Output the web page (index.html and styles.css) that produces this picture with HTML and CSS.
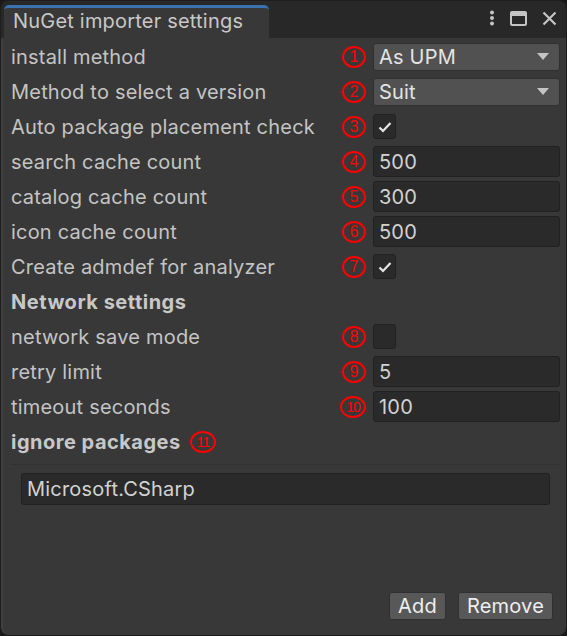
FILE: index.html
```html
<!DOCTYPE html>
<html>
<head>
<meta charset="utf-8">
<link rel="stylesheet" href="styles.css">
</head>
<body>
<div class="window">
  <div class="tabbar">
    <div class="tab">NuGet importer settings</div>
    <div class="tools">
      <svg class="kebab" width="6" height="16" viewBox="0 0 6 16"><circle cx="3" cy="2.5" r="2" fill="#c4c4c4"/><circle cx="3" cy="8" r="2" fill="#c4c4c4"/><circle cx="3" cy="13.5" r="2" fill="#c4c4c4"/></svg>
      <svg class="max" width="17" height="15" viewBox="0 0 17 15"><rect x="1" y="1" width="15" height="13" rx="1" fill="none" stroke="#c4c4c4" stroke-width="2"/><rect x="1" y="1" width="15" height="4" fill="#c4c4c4"/></svg>
      <svg class="close" width="15" height="15" viewBox="0 0 15 15"><path d="M1.5 1.5L13.5 13.5M13.5 1.5L1.5 13.5" stroke="#c4c4c4" stroke-width="2.2"/></svg>
    </div>
  </div>
  <div class="content">
    <div class="row"><span class="label">install method</span><span class="num">1</span><div class="dropdown">As UPM<span class="arrow"></span></div></div>
    <div class="row"><span class="label">Method to select a version</span><span class="num">2</span><div class="dropdown">Suit<span class="arrow"></span></div></div>
    <div class="row"><span class="label">Auto package placement check</span><span class="num">3</span><div class="check"><svg width="14" height="12" viewBox="0 0 14 12"><path d="M1.5 6.5L5 10L12.5 2" fill="none" stroke="#e6e6e6" stroke-width="2.2"/></svg></div></div>
    <div class="row"><span class="label">search cache count</span><span class="num">4</span><div class="field">500</div></div>
    <div class="row"><span class="label">catalog cache count</span><span class="num">5</span><div class="field">300</div></div>
    <div class="row"><span class="label">icon cache count</span><span class="num">6</span><div class="field">500</div></div>
    <div class="row"><span class="label">Create admdef for analyzer</span><span class="num">7</span><div class="check"><svg width="14" height="12" viewBox="0 0 14 12"><path d="M1.5 6.5L5 10L12.5 2" fill="none" stroke="#e6e6e6" stroke-width="2.2"/></svg></div></div>
    <div class="row"><span class="label bold">Network settings</span></div>
    <div class="row"><span class="label">network save mode</span><span class="num">8</span><div class="check"></div></div>
    <div class="row"><span class="label">retry limit</span><span class="num">9</span><div class="field">5</div></div>
    <div class="row"><span class="label">timeout seconds</span><span class="num small">10</span><div class="field">100</div></div>
    <div class="row"><span class="label bold">ignore packages</span><span class="num small inline">11</span></div>
    <div class="list">
      <div class="field listfield">Microsoft.CSharp</div>
    </div>
    <div class="buttons">
      <button class="btn">Add</button>
      <button class="btn">Remove</button>
    </div>
  </div>
</div>
</body>
</html>
```
FILE: styles.css
```css
html, body {
  margin: 0;
  padding: 0;
  background: #191919;
  width: 567px;
  height: 636px;
  overflow: hidden;
}
body {
  font-family: Inter, "Noto Sans", sans-serif;
  color: #d2d2d2;
}
.window {
  width: 567px;
  height: 636px;
  background: #282828;
  border-radius: 8px;
  box-sizing: border-box;
  border: 1px solid #1e1e1e;
  display: flex;
  flex-direction: column;
  overflow: hidden;
}
.tabbar {
  height: 37px;
  display: flex;
  align-items: flex-end;
  padding-left: 3px;
  flex: none;
}
.tab {
  width: 265px;
  height: 33px;
  background: #383838;
  border-top: 3px solid #3a72b0;
  border-radius: 5px 5px 0 0;
  box-sizing: border-box;
  font-size: 20px;
  letter-spacing: 0.2px;
  color: #c8c8c8;
  padding-left: 9px;
  line-height: 27px;
}
.tools {
  margin-left: auto;
  height: 37px;
  display: flex;
  align-items: center;
  gap: 15px;
  padding-right: 9px;
  padding-bottom: 3px;
  box-sizing: border-box;
}
.content {
  flex: 1;
  background: #383838;
  border-left: 2px solid #404040;
  border-radius: 0 0 8px 8px;
  padding: 1px 6px 0 8px;
  display: flex;
  flex-direction: column;
}
.row {
  height: 35px;
  display: flex;
  align-items: center;
}
.label {
  font-size: 20px;
  letter-spacing: 0.2px;
  color: #c4c4c4;
  white-space: nowrap;
  flex: none;
}
.label.bold {
  font-weight: 700;
  letter-spacing: 0.5px;
  color: #c8c8c8;
}
.num {
  margin-left: auto;
  margin-right: 7px;
  width: 24px;
  height: 22px;
  border: 2px solid #ff0000;
  border-radius: 50%;
  box-sizing: border-box;
  color: #ff0000;
  font-family: "Liberation Sans", sans-serif;
  font-size: 16px;
  line-height: 18px;
  text-align: center;
  flex: none;
}
.num.small {
  font-size: 14px;
  letter-spacing: -1px;
  width: 26px;
}
.num.inline {
  margin-left: 9px;
}
.dropdown {
  width: 187px;
  height: 28px;
  background: #515151;
  border: 1px solid #303030;
  border-radius: 3px;
  box-sizing: border-box;
  font-size: 20px;
  letter-spacing: 0.2px;
  color: #e4e4e4;
  padding-left: 5px;
  display: flex;
  align-items: center;
  flex: none;
}
.arrow {
  margin-left: auto;
  margin-right: 10px;
  width: 0;
  height: 0;
  border-left: 6px solid transparent;
  border-right: 6px solid transparent;
  border-top: 7px solid #c4c4c4;
}
.check {
  width: 23px;
  height: 25px;
  background: #2a2a2a;
  border: 1px solid #212121;
  border-radius: 3px;
  box-sizing: border-box;
  display: flex;
  align-items: center;
  justify-content: center;
  margin-right: 164px;
  flex: none;
}
.field {
  width: 187px;
  height: 31px;
  background: #2a2a2a;
  border: 1px solid #212121;
  border-radius: 3px;
  box-sizing: border-box;
  font-size: 20px;
  letter-spacing: 0.2px;
  color: #d2d2d2;
  padding-left: 5px;
  display: flex;
  align-items: center;
  flex: none;
}
.list {
  margin-top: 5px;
  height: 116px;
  background: #383838;
  border-top: 1px solid #323232;
  padding: 8px 0 0 10px;
}
.listfield {
  width: 529px;
  height: 32px;
}
.buttons {
  display: flex;
  justify-content: flex-end;
  gap: 12px;
  padding-right: 7px;
  margin-top: 3px;
}
.btn {
  height: 28px;
  background: #585858;
  border: 1px solid #303030;
  border-radius: 3px;
  color: #eeeeee;
  font-family: Inter, "Noto Sans", sans-serif;
  font-size: 20px;
  letter-spacing: 0.2px;
  padding: 0 8px;
}
```
